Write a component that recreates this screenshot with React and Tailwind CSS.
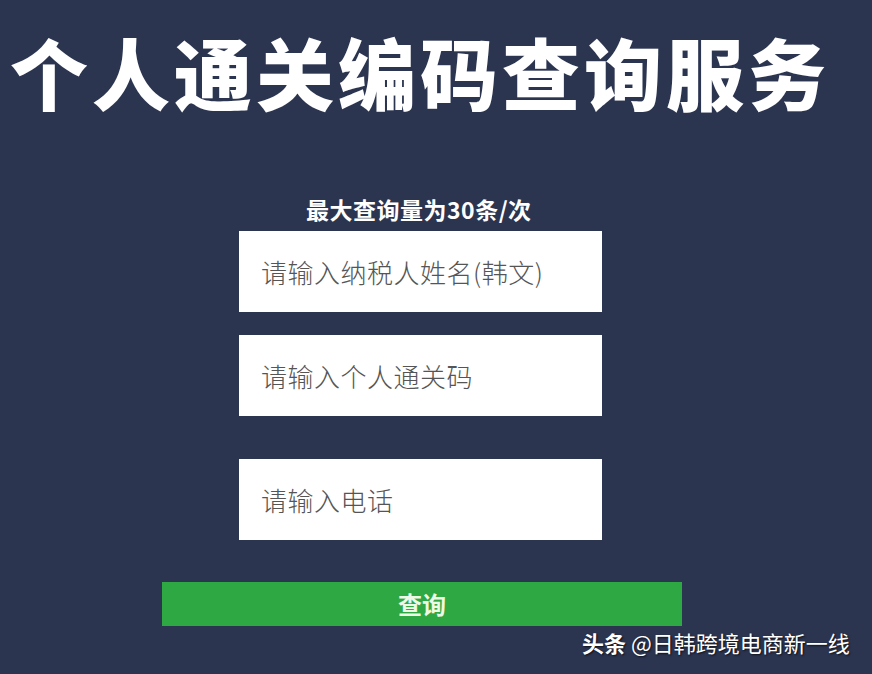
import React from 'react';

const cjk = { fontFamily: '"Noto Sans CJK SC", "Noto Sans", sans-serif' };

const Field = ({ placeholder, className = '' }) => (
  <div className={`w-[363px] h-[81px] bg-white flex items-center pl-[22px] ${className}`}>
    <span className="text-[26px] text-[#555555] font-light leading-none tracking-[0.5px]">{placeholder}</span>
  </div>
);

export default function App() {
  return (
    <div className="w-[872px] h-[674px] bg-[#2b3550] relative overflow-hidden" style={cjk}>
      {/* 标题 */}
      <h1 className="pt-[32px] pl-[10px] text-[78px] font-black text-white leading-none tracking-[4px] whitespace-nowrap">
        个人通关编码查询服务
      </h1>

      <div className="mt-[88px] flex flex-col">
        <p className="pl-[306px] text-[23px] font-semibold text-white leading-none tracking-[0.5px]">
          最大查询量为30条/次
        </p>

        <div className="pl-[239px] mt-[10px] flex flex-col">
          <Field placeholder="请输入纳税人姓名(韩文)" />
          <Field placeholder="请输入个人通关码" className="mt-[23px]" />
          <Field placeholder="请输入电话" className="mt-[43px]" />
        </div>

        <div className="pl-[162px] mt-[42px]">
          <button className="w-[520px] h-[44px] bg-[#2da843] text-[#eef8e6] text-[24px] font-bold flex items-center justify-center">
            查询
          </button>
        </div>
      </div>

      {/* 水印 */}
      <div className="absolute left-[582px] top-[631px] text-[22px] text-white leading-none whitespace-nowrap [text-shadow:1px_1px_2px_rgba(0,0,0,0.7)]">
        <span className="font-bold">头条</span> @日韩跨境电商新一线
      </div>
    </div>
  );
}
